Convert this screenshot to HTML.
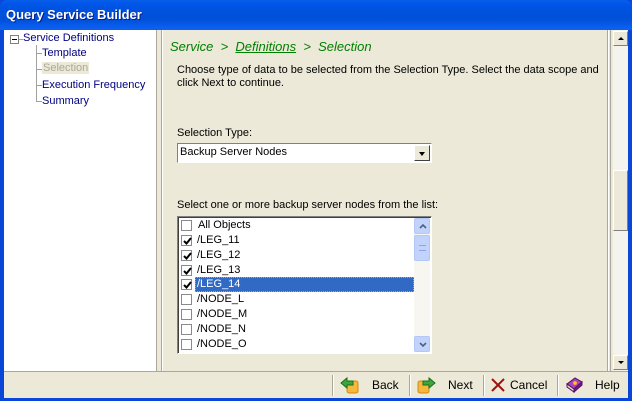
<!DOCTYPE html>
<html><head><meta charset="utf-8"><style>
*{margin:0;padding:0;box-sizing:border-box}
body{width:632px;height:401px;overflow:hidden;font-family:"Liberation Sans",Arial,sans-serif;font-size:11px;background:#0a46d8;position:relative}
.abs{position:absolute}
.title{left:0;top:0;width:632px;height:30px;background:linear-gradient(#0a5fe6 0,#0058ee 3px,#0053e0 8px,#0050d8 20px,#0a5ef0 27px,#1060e8 30px);border-radius:7px 7px 0 0}
.title span{position:absolute;left:6px;top:7px;color:#fff;font-weight:bold;font-size:13px;text-shadow:1px 1px #0a1e80}
.tree{left:4px;top:30px;width:153px;height:341px;background:#fff;color:#000080}
.tree div{position:absolute;white-space:nowrap;font-size:11px}
.main{left:157px;top:30px;width:471px;height:341px;background:#ece9d8}
.bar{left:4px;top:371px;width:624px;height:27px;background:#ece9d8;border-top:1px solid #aca899}
.it{position:absolute;left:0;width:236px;height:15px;white-space:nowrap;font-size:11px}
.it .t{position:absolute;left:19px;top:1px}
.cb{position:absolute;left:3px;top:2px;width:11px;height:11px;border:1px solid #8a8a8a;background:#fff}
.cb svg{position:absolute;left:1px;top:1px}
.sb{background:#c1d3fb;border:1px solid #b3c8f5;border-radius:2px}
.btn{position:absolute;top:2px;height:22px;font-size:12px;color:#000}
.sep{position:absolute;top:3px;width:2px;height:21px;border-left:1px solid #aca899;border-right:1px solid #fff}
</style></head><body>
<div class="abs title"><span>Query Service Builder</span></div>
<div class="abs tree">
  <div style="left:6px;top:5px;width:9px;height:9px;border:1px solid #808080;background:#fff"></div>
  <div style="left:8px;top:9px;width:5px;height:1px;background:#000"></div>
  <div style="left:15px;top:9px;width:4px;height:1px;background:#a0a0a0"></div>
  <div style="left:32px;top:15px;width:1px;height:56px;background:#a0a0a0"></div>
  <div style="left:32px;top:23px;width:6px;height:1px;background:#a0a0a0"></div>
  <div style="left:32px;top:39px;width:6px;height:1px;background:#a0a0a0"></div>
  <div style="left:32px;top:55px;width:6px;height:1px;background:#a0a0a0"></div>
  <div style="left:32px;top:71px;width:6px;height:1px;background:#a0a0a0"></div>
  <div style="left:19px;top:2px">Service Definitions</div>
  <div style="left:38px;top:17px">Template</div>
  <div style="left:38px;top:32px;background:#ece9d8;color:#aca899;padding:0 1px">Selection</div>
  <div style="left:38px;top:49px">Execution Frequency</div>
  <div style="left:38px;top:65px">Summary</div>
</div>
<div class="abs" style="left:156px;top:30px;width:1px;height:341px;background:#aca899"></div>
<div class="abs main">
  <div class="abs" style="left:4px;top:0;width:1px;height:341px;background:#aca899"></div>
  <div class="abs" style="left:5px;top:0;width:1px;height:341px;background:#fff"></div>
  <div class="abs" style="left:450px;top:0;width:1px;height:341px;background:#aca899"></div>
  <div class="abs" style="left:451px;top:0;width:1px;height:341px;background:#fff"></div>
  <div class="abs" style="left:453px;top:0;width:1px;height:341px;background:#aca899"></div>
  <div class="abs" style="left:13px;top:9px;color:#008000;font-style:italic;font-size:13px;white-space:nowrap">Service &nbsp;&gt;&nbsp; <u>Definitions</u> &nbsp;&gt;&nbsp; Selection</div>
  <div class="abs" style="left:20px;top:34px;width:432px;line-height:13px;color:#000">Choose type of data to be selected from the Selection Type. Select the data scope and click Next to continue.</div>
  <div class="abs" style="left:20px;top:97px">Selection Type:</div>
  <div class="abs" style="left:20px;top:113px;width:255px;height:20px;background:#fff;border:1px solid;border-color:#808080 #fff #fff #808080">
    <div class="abs" style="left:2px;top:2px;font-size:11px">Backup Server Nodes</div>
    <div class="abs" style="right:1px;top:1px;width:16px;height:16px;background:#ece9d8;border:1px solid;border-color:#fff #404040 #404040 #fff"><div class="abs" style="left:4px;top:6px;border:3.5px solid transparent;border-top:4px solid #000;border-bottom:0"></div></div>
  </div>
  <div class="abs" style="left:20px;top:169px">Select one or more backup server nodes from the list:</div>
  <div class="abs" style="left:20px;top:186px;width:255px;height:138px;background:#fff;border:1px solid;border-color:#808080 #fff #fff #808080;box-shadow:inset 1px 1px #404040">
    <div class="it" style="top:1px"><span class="cb"></span><span class="t" style="left:20px">All Objects</span></div>
    <div class="it" style="top:16px"><span class="cb"><svg width="9" height="9"><path d="M1 4 L3.5 6.5 L8 1" stroke="#000" stroke-width="2" fill="none"/></svg></span><span class="t">/LEG_11</span></div>
    <div class="it" style="top:31px"><span class="cb"><svg width="9" height="9"><path d="M1 4 L3.5 6.5 L8 1" stroke="#000" stroke-width="2" fill="none"/></svg></span><span class="t">/LEG_12</span></div>
    <div class="it" style="top:45.6px"><span class="cb"><svg width="9" height="9"><path d="M1 4 L3.5 6.5 L8 1" stroke="#000" stroke-width="2" fill="none"/></svg></span><span class="t">/LEG_13</span></div>
    <div class="it" style="top:60.4px"><span class="cb"><svg width="9" height="9"><path d="M1 4 L3.5 6.5 L8 1" stroke="#000" stroke-width="2" fill="none"/></svg></span><span class="abs" style="left:17px;top:0;width:219px;height:15px;background:#316ac5;outline:1px dotted #e0a040;outline-offset:-1px"></span><span class="t" style="color:#fff">/LEG_14</span></div>
    <div class="it" style="top:75.2px"><span class="cb"></span><span class="t">/NODE_L</span></div>
    <div class="it" style="top:90px"><span class="cb"></span><span class="t">/NODE_M</span></div>
    <div class="it" style="top:104.8px"><span class="cb"></span><span class="t">/NODE_N</span></div>
    <div class="it" style="top:119.6px"><span class="cb"></span><span class="t">/NODE_O</span></div>
    <div class="abs" style="right:1px;top:1px;width:16px;height:134px;background:#f7f6f1">
      <div class="abs sb" style="left:0;top:0;width:16px;height:16px"><svg class="abs" style="left:4px;top:5px" width="8" height="5"><path d="M1 4 L4 1 L7 4" stroke="#4d6185" stroke-width="1.6" fill="none"/></svg></div>
      <div class="abs sb" style="left:0;top:17px;width:16px;height:26px"><div class="abs" style="left:4px;top:9px;width:7px;height:6px;border-top:1px solid #8aa6e8;border-bottom:1px solid #8aa6e8"></div></div>
      <div class="abs sb" style="left:0;top:118px;width:16px;height:16px"><svg class="abs" style="left:4px;top:5px" width="8" height="5"><path d="M1 1 L4 4 L7 1" stroke="#4d6185" stroke-width="1.6" fill="none"/></svg></div>
    </div>
  </div>
</div>
<div class="abs" style="left:613px;top:30px;width:15px;height:341px;background:#f4f3ee">
  <div class="abs" style="left:0;top:1px;width:15px;height:15px;background:#ece9d8;border:1px solid;border-color:#fff #808080 #808080 #fff"><div class="abs" style="left:4px;top:5px;border:3px solid transparent;border-bottom:3px solid #000;border-top:0"></div></div>
  <div class="abs" style="left:0;top:140px;width:15px;height:61px;background:#ece9d8;border:1px solid;border-color:#fff #808080 #808080 #fff"></div>
  <div class="abs" style="left:0;top:325px;width:15px;height:15px;background:#ece9d8;border:1px solid;border-color:#fff #808080 #808080 #fff"><div class="abs" style="left:4px;top:5px;border:3px solid transparent;border-top:3px solid #000;border-bottom:0"></div></div>
</div>
<div class="abs bar">
  <div class="sep" style="left:328px"></div>
  <div class="btn" style="left:336px"><svg class="abs" style="left:0;top:2px" width="20" height="18"><rect x="7" y="5" width="11" height="12" rx="2" fill="#f6b73c" stroke="#d08a10"/><path d="M1 7 L7 2 L7 5 L13 5 L13 9 L7 9 L7 12 Z" fill="#3ca83c" stroke="#1d6e1d"/></svg><span class="abs" style="left:32px;top:4px">Back</span></div>
  <div class="sep" style="left:405px"></div>
  <div class="btn" style="left:412px"><svg class="abs" style="left:0;top:2px" width="20" height="18"><rect x="2" y="5" width="11" height="12" rx="2" fill="#f6b73c" stroke="#d08a10"/><path d="M19 7 L13 2 L13 5 L7 5 L7 9 L13 9 L13 12 Z" fill="#3ca83c" stroke="#1d6e1d"/></svg><span class="abs" style="left:32px;top:4px">Next</span></div>
  <div class="sep" style="left:479px"></div>
  <div class="btn" style="left:487px"><svg class="abs" style="left:0;top:4px" width="14" height="14"><path d="M1 1 L13 13 M13 1 L1 13" stroke="#a01010" stroke-width="2"/></svg><span class="abs" style="left:19px;top:4px">Cancel</span></div>
  <div class="sep" style="left:553px"></div>
  <div class="btn" style="left:561px"><svg class="abs" style="left:0;top:2px" width="18" height="18"><path d="M2 8 L10 2 L17 6 L9 13 Z" fill="#b040c0" stroke="#501060"/><path d="M2 8 L2 11 L9 16 L9 13 Z" fill="#ddd" stroke="#501060"/><path d="M9 13 L9 16 L17 9 L17 6 Z" fill="#7a1a8a" stroke="#501060"/><circle cx="10" cy="7" r="1.8" fill="#ffd000"/></svg><span class="abs" style="left:30px;top:4px">Help</span></div>
</div>
</body></html>
